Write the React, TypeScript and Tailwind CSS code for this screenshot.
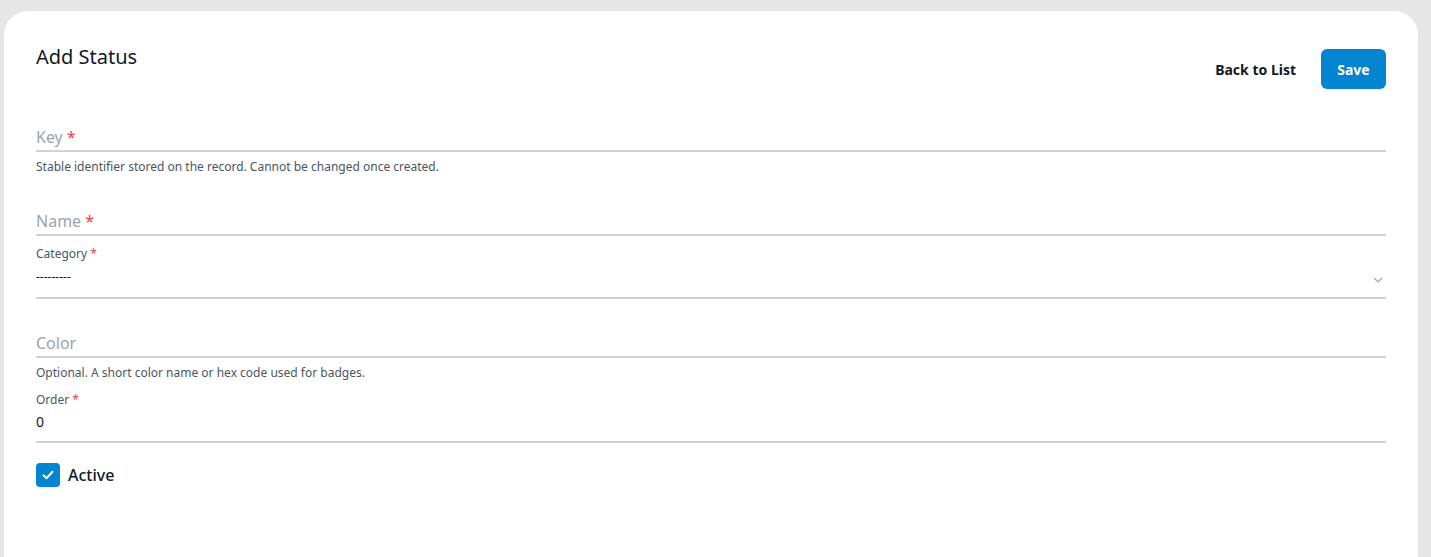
import React from "react";

const font = { fontFamily: "'Noto Sans', Roboto, sans-serif" };

function Req() {
  return <span className="text-[#ef4444] ml-[4px]">*</span>;
}

export default function App() {
  return (
    <div
      className="h-[557px] w-full overflow-hidden bg-[#e6e6e6] pl-[4px] pr-[13px] pt-[11px]"
      style={font}
    >
      <div className="h-[600px] rounded-t-[24px] bg-white px-[32px] pt-[32px]">
        <div className="flex items-start justify-between">
          <h1 className="text-[20px] leading-[28px] text-[#111827]">Add Status</h1>
          <div className="mt-[6px] flex items-center gap-[25px]">
            <button className="text-[14px] font-bold text-[#111827]">Back to List</button>
            <button className="h-[40px] w-[65px] rounded-[6px] bg-[#0284d0] text-[14px] font-bold text-white">
              Save
            </button>
          </div>
        </div>

        <div className="mt-[33px] flex h-[30px] items-center border-b-2 border-[#d1d1d1] pt-[2px] text-[16px] leading-[24px] text-[#9ca3af]">
          Key
          <Req />
        </div>
        <p className="mt-[6px] pt-[1px] text-[12px] leading-[16px] text-[#4b5563]">
          Stable identifier stored on the record. Cannot be changed once created.
        </p>

        <div className="mt-[31px] flex h-[30px] items-center border-b-2 border-[#d1d1d1] pt-[2px] text-[16px] leading-[24px] text-[#9ca3af]">
          Name
          <Req />
        </div>

        <div className="mt-[9px] pt-[1px] text-[12px] leading-[16px] text-[#4b5563]">
          Category
          <span className="text-[#ef4444] ml-[3px]">*</span>
        </div>
        <div className="flex h-[37px] items-start justify-between border-b-2 border-[#d1d1d1] pt-[5px]">
          <span className="text-[12px] leading-[20px] text-[#111827]">---------</span>
          <svg
            width="10"
            height="6"
            viewBox="0 0 10 6"
            className="mr-[3px] mt-[10px]"
            fill="none"
            stroke="#9ca3af"
            strokeWidth="1.2"
          >
            <path d="M1 1l4 4 4-4" />
          </svg>
        </div>

        <div className="mt-[29px] flex h-[30px] items-center border-b-2 border-[#d1d1d1] pt-[2px] text-[16px] leading-[24px] text-[#9ca3af]">
          Color
        </div>
        <p className="mt-[6px] pt-[1px] text-[12px] leading-[16px] text-[#4b5563]">
          Optional. A short color name or hex code used for badges.
        </p>

        <div className="mt-[10px] pt-[1px] text-[12px] leading-[16px] text-[#4b5563]">
          Order
          <span className="text-[#ef4444] ml-[3px]">*</span>
        </div>
        <div className="h-[35px] border-b-2 border-[#d1d1d1] pt-[4px] text-[14px] leading-[20px] text-[#111827]">
          0
        </div>

        <div className="mt-[20px] flex items-center gap-[8px]">
          <div className="flex h-[24px] w-[24px] items-center justify-center rounded-[4px] bg-[#0284d0]">
            <svg width="12" height="10" viewBox="0 0 12 10" fill="none" stroke="white" strokeWidth="2" strokeLinecap="round" strokeLinejoin="round">
              <path d="M1.5 5.2l3 3 6-6.5" />
            </svg>
          </div>
          <span className="text-[16px] font-medium text-[#111827]">Active</span>
        </div>
      </div>
    </div>
  );
}
